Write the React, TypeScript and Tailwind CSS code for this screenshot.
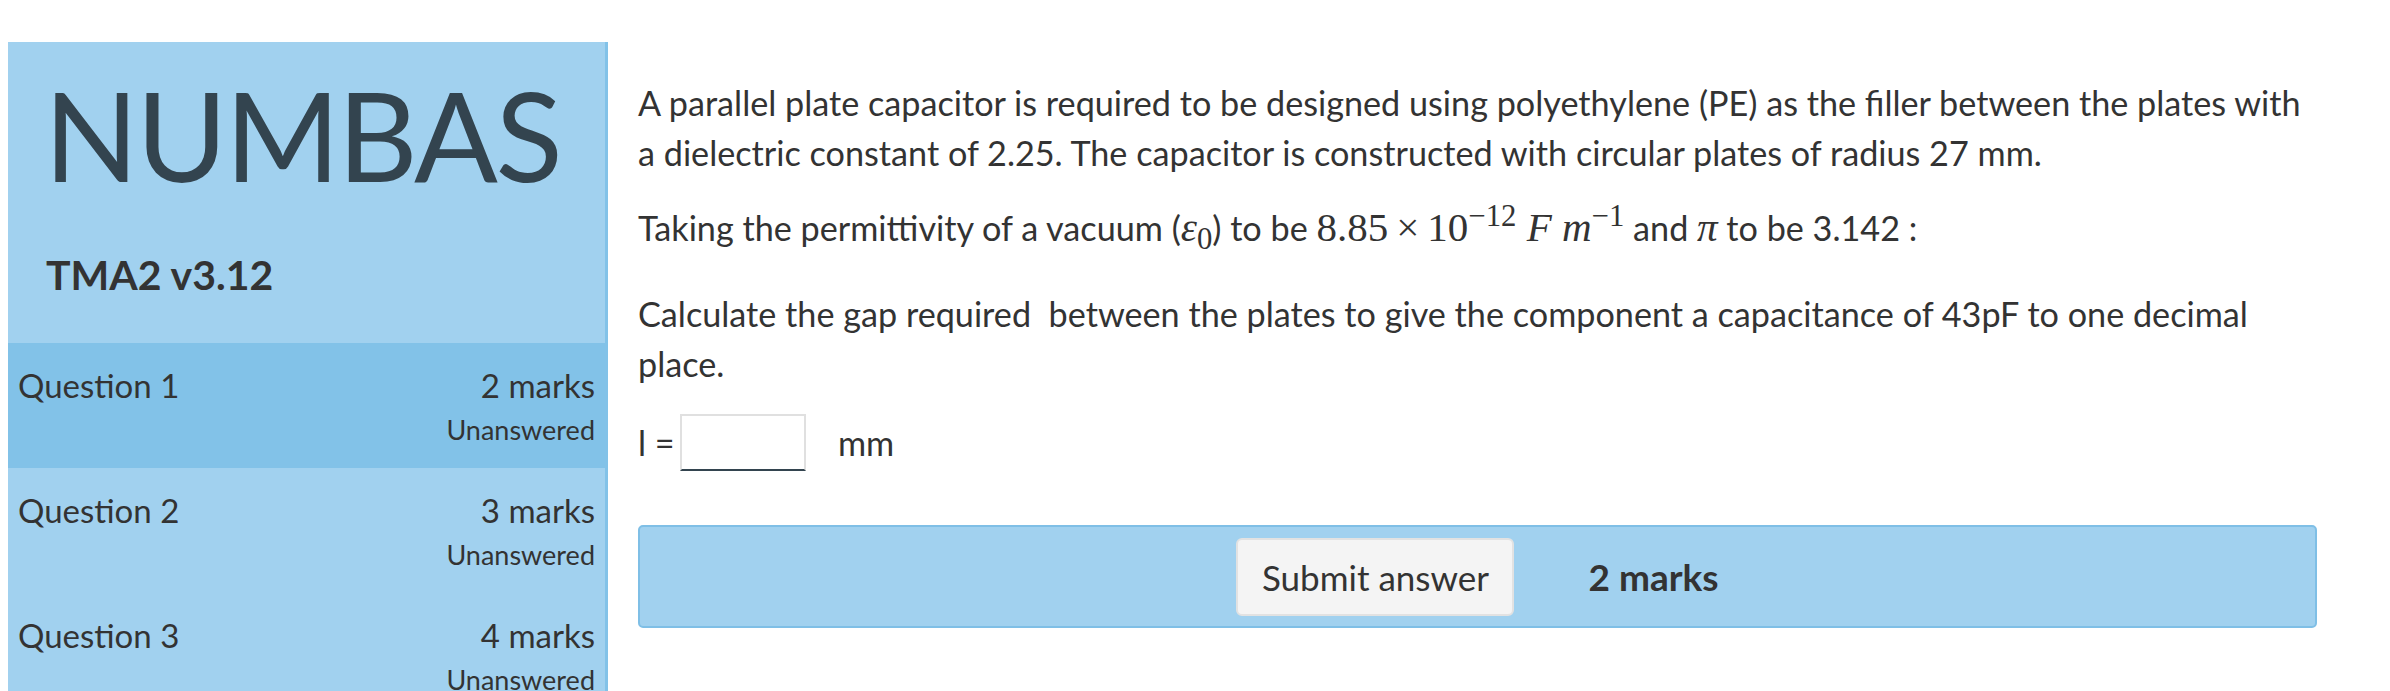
import React from 'react'

type Question = {
  name: string
  marks: number
  status: string
  active?: boolean
}

const questions: Question[] = [
  { name: 'Question 1', marks: 2, status: 'Unanswered', active: true },
  { name: 'Question 2', marks: 3, status: 'Unanswered' },
  { name: 'Question 3', marks: 4, status: 'Unanswered' },
]

function M({ children }: { children: React.ReactNode }) {
  return <span className="font-['Liberation_Serif',serif] text-[41px] leading-none">{children}</span>
}

export default function App() {
  return (
    <main className="h-[691px] overflow-hidden bg-white flex font-['Lato',sans-serif] text-[#333]">
      {/* Sidebar */}
      <aside className="ml-2 mt-[42px] w-[600px] shrink-0 bg-[#a1d1ef] border-r-[3px] border-[#82c2e8]">
        <div className="h-[301px] pl-[36px] pt-[30px]">
          <h1 className="text-[124px] leading-none text-[#33444f] tracking-[-2.5px]">NUMBAS</h1>
          <p className="mt-[58px] pl-[2px] text-[41px] leading-none font-bold">TMA2 v3.12</p>
        </div>

        {questions.map((q) => (
          <div
            key={q.name}
            className={`h-[125px] pt-[22px] pl-[10px] pr-[10px] flex justify-between ${
              q.active ? 'bg-[#82c2e8]' : ''
            }`}
          >
            <span className="text-[33px] leading-[40px]">{q.name}</span>
            <div className="flex flex-col items-end">
              <span className="text-[33px] leading-[40px]">{q.marks} marks</span>
              <span className="mt-[7px] text-[27px] leading-[36px]">{q.status}</span>
            </div>
          </div>
        ))}
      </aside>

      {/* Question content */}
      <section className="ml-[30px] w-[1679px] shrink-0 pt-[78px] text-[34.2px] leading-[50px]">
        <p>
          A parallel plate capacitor is required to be designed using polyethylene (PE) as the filler between the plates with
          <br />
          a dielectric constant of 2.25. The capacitor is constructed with circular plates of radius 27 mm.
        </p>

        <p className="mt-[25px]">
          Taking the permittivity of a vacuum (
          <M>
            <i>ε</i>
            <sub>0</sub>
          </M>
          ) to be{' '}
          <M>
            8.85<span className="mx-[8px]">×</span>10<sup>−12</sup> <i>F</i> <i>m</i>
            <sup>−1</sup>
          </M>{' '}
          and <M><i>π</i></M> to be 3.142 :
        </p>

        <p className="mt-[36px]">
          Calculate the gap required&nbsp; between the plates to give the component a capacitance of 43pF to one decimal
          <br />
          place.
        </p>

        <div className="mt-[25px] flex items-center h-[57px]">
          <span className="w-[42px] shrink-0">l =</span>
          <input
            type="text"
            className="w-[126px] h-[57px] border-2 border-[#e0e0e0] border-b-[#33444f] bg-white outline-none"
          />
          <span className="ml-[32px]">mm</span>
        </div>

        <div className="mt-[54px] h-[103px] rounded-[5px] border-2 border-[#7fbfe6] bg-[#a1d1ef] flex items-center justify-center">
          <button className="h-[78px] w-[278px] rounded-[6px] border-2 border-[#e2e2e2] bg-[#f4f4f4] text-[35px]">
            Submit answer
          </button>
          <span className="ml-[74px] text-[37px] font-bold">2 marks</span>
        </div>
      </section>
    </main>
  )
}
